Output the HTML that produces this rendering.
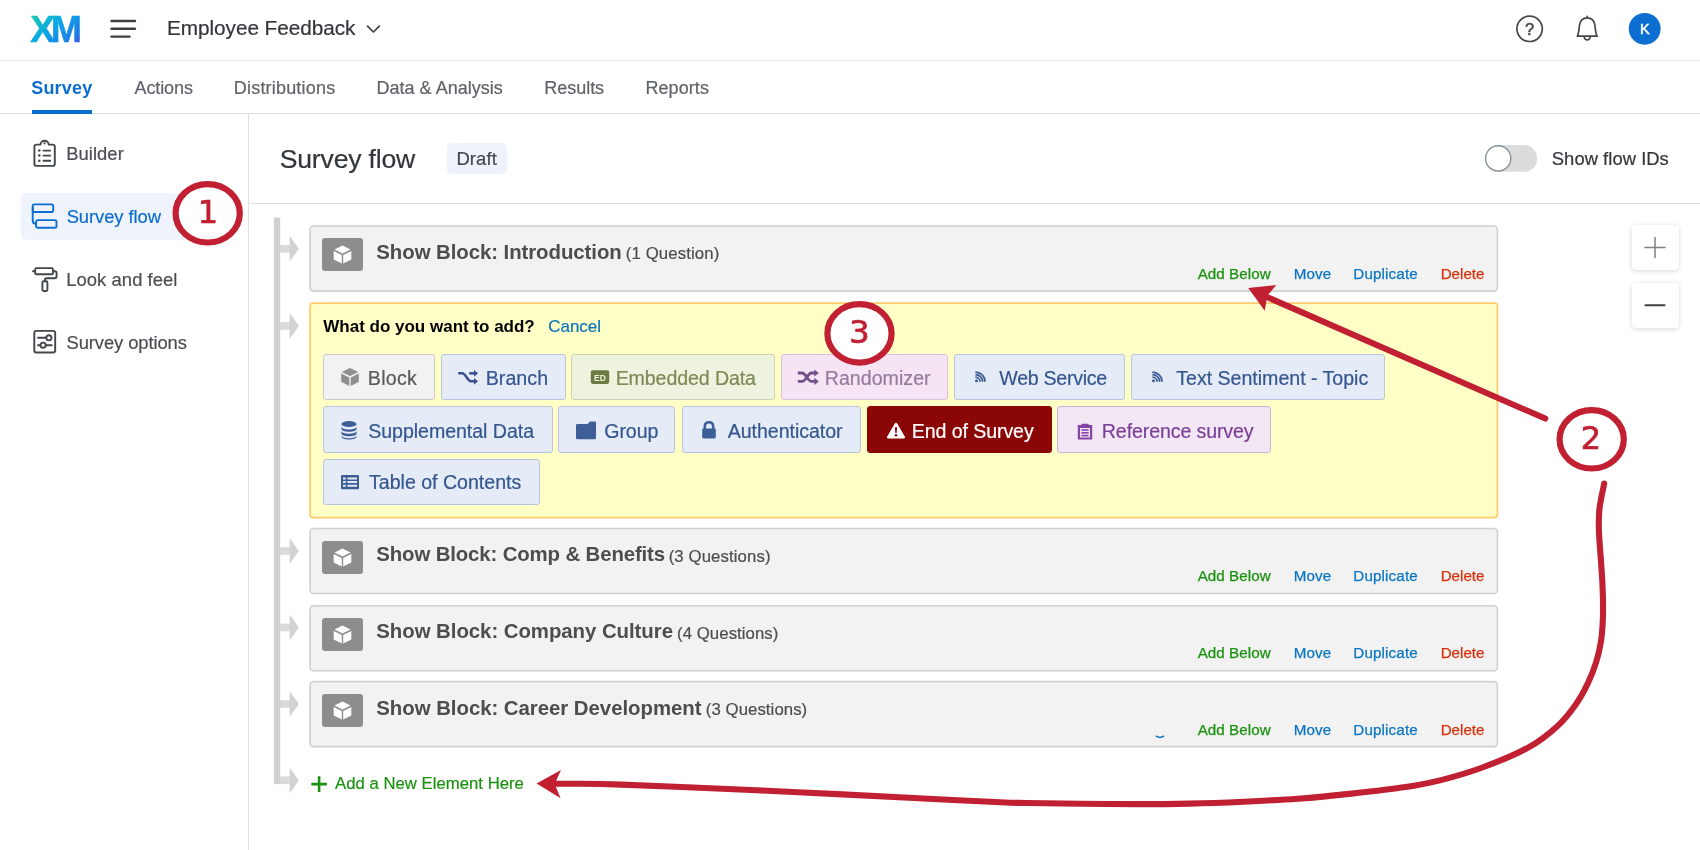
<!DOCTYPE html>
<html lang="en">
<head>
<meta charset="utf-8">
<title>Survey flow</title>
<style>
*{box-sizing:border-box;margin:0;padding:0}
html,body{width:1700px;height:850px;overflow:hidden;background:#fff}
body{font-family:"Liberation Sans",sans-serif;color:#32363a;position:relative;will-change:transform;-webkit-text-stroke:0.2px}
.bt,#what,#tab1{-webkit-text-stroke:0}
.abs{position:absolute;white-space:nowrap}
.t{position:absolute;white-space:nowrap;line-height:1}
#hdrline{left:0;top:60px;width:1700px;height:1px;background:#e9e9e9}
#tabline{left:0;top:113px;width:1700px;height:1px;background:#dcdcdc}
#sideline{left:248px;top:114px;width:1px;height:736px;background:#e0e0e0}
#titleline{left:249px;top:203px;width:1451px;height:1px;background:#dedede}
.tab{font-size:18px;color:#5f6369;top:79px}
.side{font-size:18.4px;color:#4a4e52}
.blk{position:absolute;left:310px;width:1188px;height:66px;border:1px solid transparent}
.ico{position:absolute;left:11.1px;top:11.5px;width:41px;height:33px;background:#8d8d8d;border-radius:3px}
.bt{position:absolute;left:66px;top:13px;font-size:20.4px;font-weight:bold;color:#4d4d4d;white-space:nowrap;line-height:24px}
.bp{position:absolute;left:316px;top:15.5px;font-size:16.75px;color:#4d4d4d;white-space:nowrap;line-height:24px}
.lk{-webkit-text-stroke:0.25px;position:absolute;top:39px;font-size:15.2px;line-height:16px;white-space:nowrap}
.g{color:#1b920f}.b{color:#0a76c2}.r{color:#d9300a}
.btn{position:absolute;height:46px;border:1px solid #b9c6de;background:#e7ecf6;border-radius:3px;color:#34568f;font-size:19.6px;line-height:44px;white-space:nowrap}
.btn span{position:absolute;top:1px}
#k12{top:0}
#k7,#k8,#k9,#k10,#k11{top:2px}
/*FIT*/
#proj{margin-left:-1.04px;letter-spacing:-0.046px}
#tab1{margin-left:-0.82px;letter-spacing:0.198px}
#tab2{margin-left:0.53px;letter-spacing:-0.107px}
#tab3{margin-left:-1.19px;letter-spacing:0.191px}
#tab4{margin-left:-0.63px;letter-spacing:0.031px}
#tab5{margin-left:-0.71px;letter-spacing:-0.035px}
#tab6{margin-left:-0.56px;letter-spacing:0.069px}
#s1{margin-left:-0.80px;letter-spacing:0.055px}
#s2{margin-left:-0.38px;letter-spacing:-0.067px}
#s3{margin-left:-0.78px;letter-spacing:0.066px}
#s4{margin-left:-0.46px;letter-spacing:-0.097px}
#title{margin-left:-1.29px;letter-spacing:-0.186px}
#draft{margin-left:-1.59px;letter-spacing:0.069px}
#showids{margin-left:-1.19px;letter-spacing:0.039px}
#what{margin-left:0.30px;letter-spacing:-0.003px}
#cancel{margin-left:0.13px;letter-spacing:0.015px}
#addnew{margin-left:0.10px;letter-spacing:0.023px}
#b1a{margin-left:-0.70px;letter-spacing:-0.066px}
#b1b{margin-left:-1.17px;letter-spacing:0.110px}
#b2a{margin-left:-0.70px;letter-spacing:-0.135px}
#b2b{margin-left:41.66px;letter-spacing:0.110px}
#b3a{margin-left:-0.70px;letter-spacing:-0.050px}
#b3b{margin-left:50.02px;letter-spacing:0.070px}
#b4a{margin-left:-0.70px;letter-spacing:-0.039px}
#b4b{margin-left:78.75px;letter-spacing:0.076px}
#k1{margin-left:-1.55px;letter-spacing:0.286px}
#k2{margin-left:-1.60px;letter-spacing:0.053px}
#k3{margin-left:-1.56px;letter-spacing:-0.108px}
#k4{margin-left:-1.86px;letter-spacing:0.032px}
#k5{margin-left:-0.15px;letter-spacing:-0.291px}
#k6{margin-left:-0.36px;letter-spacing:-0.025px}
#k7{margin-left:-1.20px;letter-spacing:-0.051px}
#k8{margin-left:-0.93px;letter-spacing:-0.094px}
#k9{margin-left:0.11px;letter-spacing:-0.043px}
#k10{margin-left:-1.54px;letter-spacing:-0.097px}
#k11{margin-left:-1.48px;letter-spacing:-0.118px}
#k12{margin-left:-0.35px;letter-spacing:-0.019px}
#l1{margin-left:-0.34px;letter-spacing:0.047px}
#l2{margin-left:-0.39px;letter-spacing:0.160px}
#l3{margin-left:-0.65px;letter-spacing:0.130px}
#l4{margin-left:-0.39px;letter-spacing:0.003px}
#l5{margin-left:-0.34px;letter-spacing:0.047px}
#l6{margin-left:-0.39px;letter-spacing:0.160px}
#l7{margin-left:-0.65px;letter-spacing:0.130px}
#l8{margin-left:-0.39px;letter-spacing:0.003px}
#l9{margin-left:-0.34px;letter-spacing:0.047px}
#l10{margin-left:-0.39px;letter-spacing:0.160px}
#l11{margin-left:-0.65px;letter-spacing:0.130px}
#l12{margin-left:-0.39px;letter-spacing:0.003px}
#l13{margin-left:-0.34px;letter-spacing:0.047px}
#l14{margin-left:-0.39px;letter-spacing:0.160px}
#l15{margin-left:-0.65px;letter-spacing:0.130px}
#l16{margin-left:-0.39px;letter-spacing:0.003px}
/*ENDFIT*/
</style>
</head>
<body>
<!-- header -->
<div class="abs" id="hdrline"></div>
<div class="abs" id="tabline"></div>
<div class="abs" id="sideline"></div>
<div class="abs" id="titleline"></div>

<div class="t" id="proj" style="left:168px;top:17.6px;font-size:20.75px;color:#32363a">Employee Feedback</div>

<div class="t tab" id="tab1" style="left:32px;color:#0b6ed0;font-weight:bold">Survey</div>
<div class="t tab" id="tab2" style="left:134px">Actions</div>
<div class="t tab" id="tab3" style="left:235px">Distributions</div>
<div class="t tab" id="tab4" style="left:377px">Data &amp; Analysis</div>
<div class="t tab" id="tab5" style="left:545px">Results</div>
<div class="t tab" id="tab6" style="left:646px">Reports</div>
<div class="abs" style="left:32px;top:110px;width:60px;height:4px;background:#0b6ed0"></div>

<!-- sidebar -->
<div class="abs" style="left:21px;top:193px;width:207px;height:47px;background:#eef3fc;border-radius:5px"></div>
<div class="t side" id="s1" style="left:67px;top:144.5px">Builder</div>
<div class="t side" id="s2" style="left:67px;top:207.5px;color:#0b6ed0">Survey flow</div>
<div class="t side" id="s3" style="left:67px;top:270.5px">Look and feel</div>
<div class="t side" id="s4" style="left:67px;top:333.5px">Survey options</div>

<!-- title -->
<div class="t" id="title" style="left:281px;top:145.5px;font-size:26.6px;color:#32363a">Survey flow</div>
<div class="abs" style="left:447px;top:143px;width:60px;height:31px;background:#eef2fb;border-radius:5px"></div>
<div class="t" id="draft" style="left:458px;top:149.5px;font-size:18.5px;color:#45494d">Draft</div>
<div class="t" id="showids" style="left:1553px;top:149.8px;font-size:18.4px;color:#32363a">Show flow IDs</div>


<!-- logo / header icons -->
<svg class="abs" style="left:0;top:0" width="1700" height="60" viewBox="0 0 1700 60">
  <defs>
    <linearGradient id="xmg" x1="0" y1="0" x2="1" y2="1">
      <stop offset="0" stop-color="#22d3a0"/>
      <stop offset="0.45" stop-color="#0aa7e8"/>
      <stop offset="0.8" stop-color="#1f78e6"/>
      <stop offset="1" stop-color="#6a3fe0"/>
    </linearGradient>
  </defs>
  <text id="xm" x="30.3" y="42" font-family="Liberation Sans, sans-serif" font-weight="bold" font-size="37.5" letter-spacing="-4.5" fill="url(#xmg)" stroke="url(#xmg)" stroke-width="0.5">XM</text>
  <g stroke="#3c4043" stroke-width="2.4" stroke-linecap="round">
    <line x1="111.5" y1="21" x2="135" y2="21"/>
    <line x1="111.5" y1="28.8" x2="135" y2="28.8"/>
    <line x1="111.5" y1="36.6" x2="129.5" y2="36.6"/>
  </g>
  <path d="M367.5 26.2 L373.4 32 L379.3 26.2" fill="none" stroke="#3c4043" stroke-width="1.7" stroke-linecap="round" stroke-linejoin="round"/>
  <circle cx="1529.6" cy="28.8" r="12.7" fill="none" stroke="#43474b" stroke-width="1.7"/>
  <text x="1529.6" y="34.6" text-anchor="middle" font-family="Liberation Sans, sans-serif" font-size="16.5" fill="#43474b" stroke="#43474b" stroke-width="0.5">?</text>
  <path d="M1577.3 36.2 H1597.2 M1577.6 36 C1579.4 31 1579 27 1579.6 24.6 C1580.3 20.4 1583.3 17.8 1587.2 17.8 C1591.1 17.8 1594.1 20.4 1594.8 24.6 C1595.4 27 1595 31 1596.8 36 M1587.2 17.6 V16.4 M1584.2 37.2 C1584.6 39.2 1585.8 40 1587.2 40 C1588.6 40 1589.8 39.2 1590.2 37.2" fill="none" stroke="#43474b" stroke-width="1.7" stroke-linecap="round" stroke-linejoin="round"/>
  <circle cx="1644.7" cy="28.8" r="15.9" fill="#0b6ed0"/>
  <text x="1644.9" y="33.9" text-anchor="middle" font-family="Liberation Sans, sans-serif" font-size="14.5" fill="#fff" stroke="#fff" stroke-width="0.5">K</text>
</svg>

<!-- sidebar icons -->
<svg class="abs" style="left:20px;top:130px" width="60" height="240" viewBox="20 130 60 240" fill="none" stroke-linecap="round" stroke-linejoin="round">
  <g stroke="#43474b" stroke-width="1.9">
    <path d="M40.5 144.6 H36.4 Q34.4 144.6 34.4 146.6 V163.9 Q34.4 165.9 36.4 165.9 H52.8 Q54.8 165.9 54.8 163.9 V146.6 Q54.8 144.6 52.8 144.6 H48.7 C48.7 142.4 46.8 140.7 44.6 140.7 C42.4 140.7 40.5 142.4 40.5 144.6 Z"/>
    <path d="M43.5 150.6 H50.2 M43.5 155.6 H50.2 M43.5 160.7 H50.2"/>
  </g>
  <g fill="#43474b" stroke="none"><circle cx="39.3" cy="150.6" r="1.25"/><circle cx="39.3" cy="155.6" r="1.25"/><circle cx="39.3" cy="160.7" r="1.25"/><circle cx="44.6" cy="143.3" r="1.1"/></g>
  <g stroke="#0b6ed0" stroke-width="1.9">
    <rect x="32.7" y="204.4" width="20.5" height="7.6" rx="1.8"/>
    <rect x="36.1" y="220.1" width="20.4" height="7.6" rx="1.8"/>
    <path d="M32.7 208 V220.5 Q32.7 223.9 36.1 223.9"/>
  </g>
  <g stroke="#43474b" stroke-width="1.9">
    <rect x="35.2" y="268.1" width="17.8" height="6.2" rx="1.3"/>
    <path d="M33 271.2 H35 M53 271.2 H54.7 Q56.6 271.2 56.6 273.1 V276.3 Q56.6 278.2 54.7 278.2 H46.8 Q44.9 278.2 44.9 280.1 V281"/>
    <rect x="42.4" y="281.2" width="5" height="9.8" rx="1.2"/>
    <rect x="34.3" y="330.9" width="20.9" height="21.6" rx="2"/>
    <path d="M38 337.8 H46 M38 345.2 H40.2 M46 345.2 H51.7"/>
    <circle cx="48.9" cy="337.8" r="2.6"/>
    <circle cx="43.1" cy="345.2" r="2.6"/>
  </g>
</svg>

<!-- toggle -->
<svg class="abs" style="left:1480px;top:140px" width="62" height="37" viewBox="1480 140 62 37"><rect x="1485" y="145" width="52.2" height="26.8" rx="13.4" fill="#dcdcdc"/><circle cx="1498.2" cy="158.4" r="12.6" fill="#fff" stroke="#8a939e" stroke-width="1.4"/></svg>

<!-- zoom buttons -->
<div class="abs" style="left:1632px;top:225px;width:46.5px;height:45px;background:#fff;border-radius:4px;box-shadow:0 1px 5px rgba(0,0,0,.17)"></div>
<div class="abs" style="left:1632px;top:283px;width:46.5px;height:45px;background:#fff;border-radius:4px;box-shadow:0 1px 5px rgba(0,0,0,.17)"></div>
<svg class="abs" style="left:1632px;top:225px" width="46" height="102" viewBox="0 0 46 102" stroke="#7d8185" stroke-width="1.5" stroke-linecap="round"><path d="M13 22.5 H33 M23 12.5 V32.5"/><path d="M13.5 80.3 H32.5" stroke="#3c4043" stroke-width="2"/></svg>


<!-- flow rail -->
<svg class="abs" style="left:260px;top:210px" width="50" height="600" viewBox="260 210 50 600">
<rect x="273.9" y="217.5" width="6.3" height="566.6" fill="#d0d0d0"/>
<rect x="280" y="245.0" width="10" height="7.6" fill="#dadada"/><path d="M289.6 235.8 L298.8 248.8 L289.6 261.8 Z" fill="#d2d2d2"/><rect x="280" y="322.2" width="10" height="7.6" fill="#dadada"/><path d="M289.6 313 L298.8 326 L289.6 339 Z" fill="#d2d2d2"/><rect x="280" y="547.2" width="10" height="7.6" fill="#dadada"/><path d="M289.6 538 L298.8 551 L289.6 564 Z" fill="#d2d2d2"/><rect x="280" y="623.7" width="10" height="7.6" fill="#dadada"/><path d="M289.6 614.5 L298.8 627.5 L289.6 640.5 Z" fill="#d2d2d2"/><rect x="280" y="700.2" width="10" height="7.6" fill="#dadada"/><path d="M289.6 691 L298.8 704 L289.6 717 Z" fill="#d2d2d2"/>
<rect x="280" y="776.4" width="10" height="7.7" fill="#dadada"/><path d="M289.6 767.4 L298.8 780.4 L289.6 793.4 Z" fill="#d2d2d2"/>
</svg>
<svg class="abs" style="left:300px;top:215px" width="1210" height="545" viewBox="300 215 1210 545">
<g fill="#f2f2f2" stroke="#d0d0d0" stroke-width="1.6">
<rect x="310.05" y="226.05" width="1187.4" height="65.05" rx="3.5"/>
<rect x="310.05" y="528.5" width="1187.4" height="65" rx="3.5"/>
<rect x="310.05" y="605.75" width="1187.4" height="65" rx="3.5"/>
<rect x="310.05" y="681.6" width="1187.4" height="65" rx="3.5"/>
</g>
<rect x="310.05" y="303.15" width="1187.4" height="214.45" rx="3" fill="#ffffc6" stroke="#fdcb6b" stroke-width="1.7"/>
<path d="M1156.3 736.2 Q1160 738.6 1163.6 736.2" fill="none" stroke="#0a76c2" stroke-width="1.5" stroke-linecap="round"/>
</svg>
<div class="blk" style="top:225.5px"><div class="ico"><svg style="position:absolute;left:11px;top:7px" width="19" height="19" viewBox="0 0 19 19"><g fill="#fff"><path d="M9.5 0.6 L17.5 4.6 L9.5 8.6 L1.5 4.6 Z"/><path d="M0.7 6 L8.8 10 V18.6 L0.7 14.4 Z"/><path d="M18.3 6 L10.2 10 V18.6 L18.3 14.4 Z"/></g></svg></div><div class="bt" id="b1a">Show Block: Introduction</div><div class="bp" id="b1b">(1 Question)</div>
<div class="lk g" id="l1" style="left:887px">Add Below</div><div class="lk b" id="l2" style="left:983px">Move</div><div class="lk b" id="l3" style="left:1043px">Duplicate</div><div class="lk r" id="l4" style="left:1130px">Delete</div></div>

<div class="t" id="what" style="left:323px;top:317.7px;font-size:17px;font-weight:bold;color:#000">What do you want to add?</div>
<div class="t" id="cancel" style="left:548px;top:317.7px;font-size:17px;color:#0a74bd">Cancel</div>
<div class="btn" style="left:322.6px;top:354px;width:112.1px;background:#f2f2f2;border-color:#c9c9c9;color:#5a5a5a"><svg style="position:absolute;left:15.8px;top:11px" width="22" height="22" viewBox="0 0 22 22"><g fill="#8e8e8e"><path d="M11 2 L19.2 6 L11 10 L2.8 6 Z"/><path d="M2.2 7.4 L10.3 11.4 V20 L2.2 15.8 Z"/><path d="M19.8 7.4 L11.7 11.4 V20 L19.8 15.8 Z"/></g></svg><span id="k1" style="left:45.8px">Block</span></div>
<div class="btn" style="left:440.5px;top:354px;width:125.0px;background:#e6ecf7;border-color:#b7c5e0;color:#34568f"><svg style="position:absolute;left:15.8px;top:11px" width="22" height="22" viewBox="0 0 22 22"><g fill="none" stroke="#3a4f8f" stroke-width="2.5"><path d="M1.2 7.3 H5.2 C8.6 7.3 10.6 15.3 14 15.3 H17.5"/><path d="M12.2 7.3 H17.5"/></g><g fill="#3a4f8f"><path d="M17 3.9 L21 7.3 L17 10.7 Z"/><path d="M17 11.9 L21 15.3 L17 18.7 Z"/></g></svg><span id="k2" style="left:45.8px">Branch</span></div>
<div class="btn" style="left:571.4px;top:354px;width:203.4px;background:#eef2df;border-color:#cbd6b3;color:#7b8a55"><svg style="position:absolute;left:16.5px;top:11px" width="22" height="22" viewBox="0 0 22 22"><rect x="1.8" y="4.3" width="18.4" height="13.6" rx="1.8" fill="#6d7b45"/><text x="11" y="14.6" text-anchor="middle" font-family="Liberation Sans, sans-serif" font-weight="bold" font-size="8.6" fill="#eef3dc">ED</text></svg><span id="k3" style="left:44.8px">Embedded Data</span></div>
<div class="btn" style="left:781.2px;top:354px;width:166.4px;background:#f5e4f3;border-color:#dcc0de;color:#98799f"><svg style="position:absolute;left:14.8px;top:11px" width="22" height="22" viewBox="0 0 22 22"><g fill="none" stroke="#73508a" stroke-width="2.8"><path d="M0.8 7 H5.2 C8.8 7 10.8 15.4 14.4 15.4 H18"/><path d="M0.8 15.4 H5.2 C8.8 15.4 10.8 7 14.4 7 H18"/></g><g fill="#73508a"><path d="M17.4 3.4 L21.8 7 L17.4 10.6 Z"/><path d="M17.4 11.8 L21.8 15.4 L17.4 19 Z"/></g></svg><span id="k4" style="left:44.4px">Randomizer</span></div>
<div class="btn" style="left:953.6px;top:354px;width:171.1px;background:#e6ecf7;border-color:#b7c5e0;color:#34568f"><svg style="position:absolute;left:15.6px;top:11px" width="22" height="22" viewBox="0 0 22 22"><g fill="none" stroke="#3d5c97" stroke-width="1.7"><path d="M5.4 6.1 A9.7 9.7 0 0 1 15.1 15.8"/><path d="M5.4 8.6 A7.2 7.2 0 0 1 12.6 15.8"/><path d="M5.4 11.1 A4.7 4.7 0 0 1 10.1 15.8"/></g><circle cx="6.5" cy="14.7" r="1.5" fill="#3d5c97"/></svg><span id="k5" style="left:44.9px">Web Service</span></div>
<div class="btn" style="left:1130.7px;top:354px;width:254.3px;background:#e6ecf7;border-color:#b7c5e0;color:#34568f"><svg style="position:absolute;left:15.1px;top:11px" width="22" height="22" viewBox="0 0 22 22"><g fill="none" stroke="#3d5c97" stroke-width="1.7"><path d="M5.4 6.1 A9.7 9.7 0 0 1 15.1 15.8"/><path d="M5.4 8.6 A7.2 7.2 0 0 1 12.6 15.8"/><path d="M5.4 11.1 A4.7 4.7 0 0 1 10.1 15.8"/></g><circle cx="6.5" cy="14.7" r="1.5" fill="#3d5c97"/></svg><span id="k6" style="left:45.0px">Text Sentiment - Topic</span></div>
<div class="btn" style="left:322.5px;top:406px;height:46.6px;width:230.0px;background:#e6ecf7;border-color:#b7c5e0;color:#34568f"><svg style="position:absolute;left:14.1px;top:12.2px" width="22" height="22" viewBox="0 0 22 22"><g fill="#3d5e96"><ellipse cx="11" cy="5" rx="7.6" ry="3"/><path d="M3.4 7.4 C3.4 9.2 6.8 10.4 11 10.4 C15.2 10.4 18.6 9.2 18.6 7.4 V9.8 C18.6 11.6 15.2 12.8 11 12.8 C6.8 12.8 3.4 11.6 3.4 9.8 Z"/><path d="M3.4 11.8 C3.4 13.6 6.8 14.8 11 14.8 C15.2 14.8 18.6 13.6 18.6 11.8 V14.2 C18.6 16 15.2 17.2 11 17.2 C6.8 17.2 3.4 16 3.4 14.2 Z"/><path d="M3.4 16.2 C3.4 18 6.8 19.2 11 19.2 C15.2 19.2 18.6 18 18.6 16.2 V17.6 C18.6 19.4 15.2 20.6 11 20.6 C6.8 20.6 3.4 19.4 3.4 17.6 Z"/></g></svg><span id="k7" style="left:45.9px">Supplemental Data</span></div>
<div class="btn" style="left:558.4px;top:406px;height:46.6px;width:116.9px;background:#e6ecf7;border-color:#b7c5e0;color:#34568f"><svg style="position:absolute;left:15.4px;top:12.2px" width="22" height="22" viewBox="0 0 22 22"><path d="M1 6.2 Q1 5 2.2 5 H12.5 L15 2.4 H19.8 Q21 2.4 21 3.6 V19 Q21 20.2 19.8 20.2 H2.2 Q1 20.2 1 19 Z" fill="#3d5e96"/></svg><span id="k8" style="left:45.8px">Group</span></div>
<div class="btn" style="left:681.7px;top:406px;height:46.6px;width:179.8px;background:#e6ecf7;border-color:#b7c5e0;color:#34568f"><svg style="position:absolute;left:15.1px;top:12.2px" width="22" height="22" viewBox="0 0 22 22"><g><path d="M6.8 10 V7.4 C6.8 4.6 8.6 3.2 11 3.2 C13.4 3.2 15.2 4.6 15.2 7.4 V10" fill="none" stroke="#3d5e96" stroke-width="2.6"/><rect x="4.2" y="9.6" width="13.6" height="9.8" rx="1.4" fill="#3d5e96"/></g></svg><span id="k9" style="left:44.9px">Authenticator</span></div>
<div class="btn" style="left:867px;top:406px;height:46.6px;width:184.8px;background:#8b0707;border-color:#8b0707;color:#ffffff"><svg style="position:absolute;left:16.5px;top:12.2px" width="22" height="22" viewBox="0 0 22 22"><path d="M11 3.8 Q11.8 3.8 12.3 4.7 L19.9 17.8 Q20.6 19.4 18.9 19.4 H3.1 Q1.4 19.4 2.1 17.8 L9.7 4.7 Q10.2 3.8 11 3.8 Z" fill="#ffffff"/><path d="M9.9 8.2 H12.1 L11.7 14 H10.3 Z" fill="#8b0707"/><circle cx="11" cy="16.3" r="1.25" fill="#8b0707"/></svg><span id="k10" style="left:45.3px">End of Survey</span></div>
<div class="btn" style="left:1057.3px;top:406px;height:46.6px;width:213.7px;background:#f3e7f5;border-color:#cdb4da;color:#7b3f98"><svg style="position:absolute;left:15.5px;top:12.2px" width="22" height="22" viewBox="0 0 22 22"><g fill="#8544a5"><path d="M3.8 6 H7.4 V4.8 H14.6 V6 H18.2 V20.6 H3.8 Z M6 9 V18.6 H16 V9 Z" fill-rule="evenodd"/><rect x="7.4" y="10.2" width="7.2" height="1.6"/><rect x="7.4" y="13" width="7.2" height="1.6"/><rect x="7.4" y="15.8" width="7.2" height="1.6"/></g></svg><span id="k11" style="left:45.0px">Reference survey</span></div>
<div class="btn" style="left:322.5px;top:459px;width:217.0px;background:#e6ecf7;border-color:#b7c5e0;color:#34568f"><svg style="position:absolute;left:15.2px;top:11px" width="22" height="22" viewBox="0 0 22 22"><path d="M3 4 H19 Q20 4 20 5 V17.2 Q20 18.2 19 18.2 H3 Q2 18.2 2 17.2 V5 Q2 4 3 4 Z M4 6.5 V8.5 H6.8 V6.5 Z M8.4 6.5 V8.5 H18 V6.5 Z M4 10.1 V12.1 H6.8 V10.1 Z M8.4 10.1 V12.1 H18 V10.1 Z M4 13.7 V15.7 H6.8 V13.7 Z M8.4 13.7 V15.7 H18 V13.7 Z" fill="#3d5e96" fill-rule="evenodd"/></svg><span id="k12" style="left:45.9px">Table of Contents</span></div>
<div class="blk" style="top:528px"><div class="ico"><svg style="position:absolute;left:11px;top:7px" width="19" height="19" viewBox="0 0 19 19"><g fill="#fff"><path d="M9.5 0.6 L17.5 4.6 L9.5 8.6 L1.5 4.6 Z"/><path d="M0.7 6 L8.8 10 V18.6 L0.7 14.4 Z"/><path d="M18.3 6 L10.2 10 V18.6 L18.3 14.4 Z"/></g></svg></div><div class="bt" id="b2a">Show Block: Comp &amp; Benefits</div><div class="bp" id="b2b">(3 Questions)</div>
<div class="lk g" id="l5" style="left:887px">Add Below</div><div class="lk b" id="l6" style="left:983px">Move</div><div class="lk b" id="l7" style="left:1043px">Duplicate</div><div class="lk r" id="l8" style="left:1130px">Delete</div></div><div class="blk" style="top:605px"><div class="ico"><svg style="position:absolute;left:11px;top:7px" width="19" height="19" viewBox="0 0 19 19"><g fill="#fff"><path d="M9.5 0.6 L17.5 4.6 L9.5 8.6 L1.5 4.6 Z"/><path d="M0.7 6 L8.8 10 V18.6 L0.7 14.4 Z"/><path d="M18.3 6 L10.2 10 V18.6 L18.3 14.4 Z"/></g></svg></div><div class="bt" id="b3a">Show Block: Company Culture</div><div class="bp" id="b3b">(4 Questions)</div>
<div class="lk g" id="l9" style="left:887px">Add Below</div><div class="lk b" id="l10" style="left:983px">Move</div><div class="lk b" id="l11" style="left:1043px">Duplicate</div><div class="lk r" id="l12" style="left:1130px">Delete</div></div><div class="blk" style="top:681.5px"><div class="ico"><svg style="position:absolute;left:11px;top:7px" width="19" height="19" viewBox="0 0 19 19"><g fill="#fff"><path d="M9.5 0.6 L17.5 4.6 L9.5 8.6 L1.5 4.6 Z"/><path d="M0.7 6 L8.8 10 V18.6 L0.7 14.4 Z"/><path d="M18.3 6 L10.2 10 V18.6 L18.3 14.4 Z"/></g></svg></div><div class="bt" id="b4a">Show Block: Career Development</div><div class="bp" id="b4b">(3 Questions)</div>
<div class="lk g" id="l13" style="left:887px">Add Below</div><div class="lk b" id="l14" style="left:983px">Move</div><div class="lk b" id="l15" style="left:1043px">Duplicate</div><div class="lk r" id="l16" style="left:1130px">Delete</div></div>
<svg class="abs" style="left:308px;top:773px" width="22" height="22" viewBox="308 773 22 22"><path d="M311.3 784.1 H326.9 M319.1 776.3 V791.9" stroke="#1b920f" stroke-width="2.6" stroke-linecap="butt"/></svg>
<div class="t" id="addnew" style="left:335px;top:776px;font-size:16.7px;color:#1b920f;-webkit-text-stroke:0.2px">Add a New Element Here</div>


<!-- annotations -->
<svg class="abs" style="left:0;top:0;pointer-events:none" width="1700" height="850" viewBox="0 0 1700 850">
 <g fill="#fff" stroke="#c02031" stroke-width="6.2">
  <ellipse cx="207.7" cy="213.3" rx="32.1" ry="29.2"/>
  <ellipse cx="1591.7" cy="439.3" rx="32.1" ry="29.2"/>
  <ellipse cx="859.5" cy="333.4" rx="32.1" ry="29.2"/>
 </g>
 <g font-family="DejaVu Sans, sans-serif" font-size="32" fill="#c02031" stroke="#c02031" stroke-width="0.7" text-anchor="middle">
  <text id="n1" x="208" y="222.7">1</text>
  <text id="n2" x="1591" y="448.5">2</text>
  <text id="n3" x="859.4" y="343">3</text>
 </g>
 <!-- arrow A: circle 2 -> Add Below -->
 <path d="M1545.3 418.6 L1268 297.5" fill="none" stroke="#c02031" stroke-width="6" stroke-linecap="round"/>
 <path d="M1248.2 288.1 L1276.4 285 L1267.5 295.5 L1264.7 310.7 Z" fill="#c02031"/>
 <!-- arrow B: circle 2 -> Add a New Element Here -->
 <path d="M1604.2 483.5 C1603.4 487.5 1600.5 500.5 1599.6 507.7 C1598.7 514.9 1598.8 520.2 1598.8 526.5 C1598.8 532.8 1599.4 539.0 1599.8 545.3 C1600.2 551.6 1600.8 557.9 1601.2 564.2 C1601.6 570.5 1602.1 576.7 1602.4 583.0 C1602.7 589.3 1602.9 595.5 1603.0 601.8 C1603.1 608.1 1603.1 614.1 1602.8 620.7 C1602.5 627.3 1602.1 634.2 1601.0 641.2 C1599.9 648.2 1598.3 655.3 1596.1 662.4 C1593.9 669.5 1591.1 676.5 1587.7 683.6 C1584.3 690.7 1580.6 697.7 1575.6 704.7 C1570.6 711.8 1565.4 718.8 1557.6 725.9 C1549.8 733.0 1541.5 740.2 1529.0 747.1 C1516.5 754.0 1497.2 762.0 1482.4 767.5 C1467.6 773.0 1452.8 777.1 1440.0 780.4 C1427.2 783.6 1420.5 784.8 1405.8 787.0 C1391.1 789.2 1369.7 791.6 1351.7 793.6 C1333.7 795.6 1315.6 797.4 1297.6 798.7 C1279.6 800.1 1261.5 800.9 1243.5 801.7 C1225.5 802.5 1207.4 803.2 1189.4 803.6 C1171.4 804.0 1153.3 804.1 1135.3 804.1 C1117.3 804.1 1099.2 804.0 1081.2 803.8 C1063.2 803.6 1040.5 803.2 1027.0 803.0 C1013.5 802.8 1018.0 803.1 1000.0 802.3 C982.0 801.5 945.9 799.6 918.8 798.2 C891.7 796.8 864.6 795.4 837.6 794.1 C810.6 792.8 783.5 791.5 756.5 790.3 C729.5 789.1 697.8 787.8 675.3 786.8 C652.8 785.8 637.0 785.1 621.2 784.6 C605.4 784.1 591.5 783.9 580.6 783.8 C569.7 783.6 560.1 783.7 556.0 783.7" fill="none" stroke="#c02031" stroke-width="6.1" stroke-linecap="round"/>
 <path d="M536.6 783.6 L561 770 L554.7 784 L560.6 798.2 Z" fill="#c02031"/>
</svg>

</body>
</html>
